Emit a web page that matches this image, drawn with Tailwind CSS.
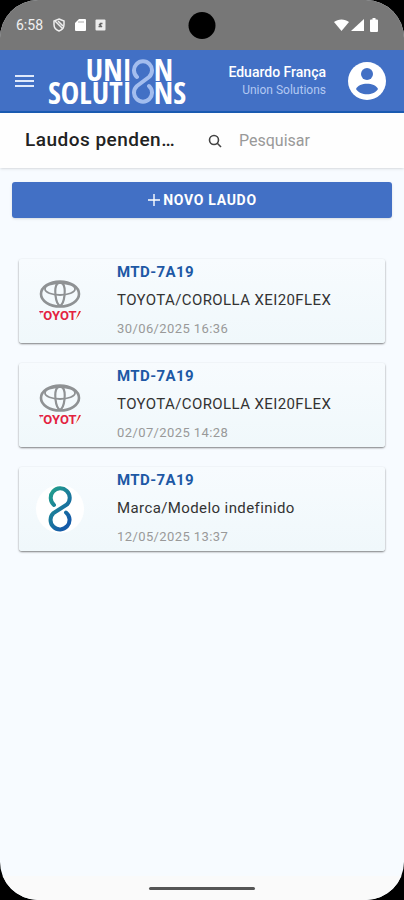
<!DOCTYPE html>
<html lang="pt-BR">
<head>
    <meta charset="UTF-8">
    <meta name="viewport" content="width=device-width, initial-scale=1.0">
    <title>Laudos pendentes</title>
    <script src="https://cdn.jsdelivr.net/npm/@tailwindcss/browser@4"></script>
</head>
<body class="bg-black font-[Roboto,sans-serif]">
    <div class="relative flex min-h-screen flex-col overflow-hidden rounded-[38px] bg-[#f7fbff]">

        <!-- Status bar -->
        <div class="relative flex h-[50px] items-center justify-between bg-[#777777] pl-4 pr-[26px] text-white">
            <div class="flex items-center gap-[9px]">
                <span class="text-sm text-white/90">6:58</span>
                <svg class="h-[14px] w-[14px]" viewBox="0 0 14 14" fill="none" stroke="#eeeeee" stroke-width="1.5">
                    <path d="M7 1 12 3v3.500C12 9.500 10 12 7 13 4 12 2 9.500 2 6.500V3z"/>
                    <path d="M3 3l8 8M6 3l5 5"/>
                </svg>
                <svg class="h-[14px] w-[11px]" viewBox="0 0 11 14" fill="#ffffff">
                    <path d="M4 1h6a1 1 0 0 1 1 1v10a1 1 0 0 1-1 1H1a1 1 0 0 1-1-1V5z"/>
                    <path d="M4 3v2M6 3v2M8 3v2" stroke="#aaaaaa"/>
                </svg>
                <svg class="h-[12px] w-[11px]" viewBox="0 0 11 12">
                    <rect x="0.500" y="0.500" width="10" height="11" rx="1" fill="#eeeeee"/>
                    <path d="M3.500 7.500h2v-3h2M4 5l3 3" stroke="#666666" stroke-width="1.300" fill="none"/>
                </svg>
            </div>
            <div class="absolute left-1/2 top-3 h-[27px] w-[27px] -translate-x-1/2 rounded-full bg-black"></div>
            <div class="flex items-center gap-[2px]">
                <svg class="h-[14px] w-[15px]" viewBox="0 0 15 14" fill="#ffffff"><path d="M0 4C4 .5 11 .5 15 4L7.500 13z"/></svg>
                <svg class="h-[14px] w-[13px]" viewBox="0 0 13 14" fill="#ffffff"><path d="M13 1v12H0z"/></svg>
                <svg class="ml-1 h-[14px] w-[8px]" viewBox="0 0 8 14" fill="#ffffff"><path d="M2.500 0h3v1.500H7a1 1 0 0 1 1 1V13a1 1 0 0 1-1 1H1a1 1 0 0 1-1-1V2.500a1 1 0 0 1 1-1h1.500z"/></svg>
            </div>
        </div>

        <!-- Header -->
        <header class="flex h-[63px] items-center border-b-2 border-[#1b5cb3] bg-[#4270c5] pl-[15px] pr-[18px] text-white">
            <button type="button" aria-label="Menu" class="mr-[14px] shrink-0">
                <svg class="h-[14px] w-[19px]" viewBox="0 0 19 14" stroke="#dfe9fb" stroke-width="2"><path d="M0 2h19M0 7h19M0 12h19"/></svg>
            </button>
            <div class="flex items-center font-['Open_Sans_Condensed','Noto_Sans_Condensed',Roboto,sans-serif] text-[31px] font-extrabold leading-[23px]">
                <div class="text-right">
                    <div>UNI</div>
                    <div>SOLUTI</div>
                </div>
                <svg class="h-[46px] w-[22px]" viewBox="0 0 22 46" fill="none" stroke="#a3bdee" stroke-width="4" stroke-linecap="round">
                    <path d="M5 19A9 9 0 1 1 17 19L5 28A9 9 0 1 0 17 28"/>
                </svg>
                <div>
                    <div>N</div>
                    <div>NS</div>
                </div>
            </div>
            <div class="ml-auto text-right">
                <div class="text-sm font-medium leading-[18px]">Eduardo França</div>
                <div class="text-xs leading-[18px] text-[#b2c8f2]">Union Solutions</div>
            </div>
            <a href="#perfil" aria-label="Perfil" class="ml-[22px] shrink-0">
                <svg class="h-[38px] w-[38px]" viewBox="0 0 38 38">
                    <circle cx="19" cy="19" r="19" fill="#ffffff"/>
                    <circle cx="19" cy="12" r="6" fill="#4270c5"/>
                    <path d="M8 27c3-7 19-7 22 0-4 7-18 7-22 0z" fill="#4270c5"/>
                </svg>
            </a>
        </header>

        <!-- Title and search -->
        <div class="flex h-[55px] items-center bg-[#fefefe] pl-[25px] pr-4 shadow">
            <h1 class="w-[155px] shrink-0 truncate text-[19px] font-medium tracking-wide text-[#222222]">Laudos pendentes</h1>
            <svg class="ml-7 h-[14px] w-[14px] shrink-0" viewBox="0 0 14 14" fill="none" stroke="#444444" stroke-width="1.600"><circle cx="6" cy="6" r="4.500"/><path d="m9 9 4 4"/></svg>
            <input type="search" aria-label="Pesquisar" placeholder="Pesquisar" class="ml-[17px] h-8 min-w-0 flex-1 bg-transparent text-base outline-none placeholder:text-[#999999]">
        </div>

        <!-- Content -->
        <main class="flex flex-1 flex-col">
            <button type="button" class="mx-3 mt-[14px] flex h-[36px] items-center justify-center gap-[2px] rounded-[3px] bg-[#4270c5] text-sm font-bold tracking-wider text-white shadow">
                <svg class="h-[14px] w-[14px]" viewBox="0 0 14 14" stroke="#ffffff" stroke-width="1.400"><path d="M7 1v12M1 7h12"/></svg>
                NOVO LAUDO
            </button>

            <ul class="mx-[19px] mt-[41px] flex flex-col gap-5">
                <li>
                    <a href="#laudo-1" class="flex h-[84px] items-center rounded-[3px] bg-linear-to-b from-[#f7fbfe] to-[#f0f8fb] pl-4 shadow-[0_1px_2px_rgba(0,0,0,0.5)]">
                        <svg class="h-[50px] w-[50px] shrink-0" viewBox="0 0 50 50"><use href="#toyota"/></svg>
                        <div class="ml-8 flex flex-col tracking-wide">
                            <span class="text-[15px] font-bold leading-[26px] text-[#1d58a5]">MTD-7A19</span>
                            <span class="text-[15px] leading-[30px] text-[#333333]">TOYOTA/COROLLA XEI20FLEX</span>
                            <span class="text-[13px] leading-[28px] text-[#999999]">30/06/2025 16:36</span>
                        </div>
                    </a>
                </li>
                <li>
                    <a href="#laudo-2" class="flex h-[84px] items-center rounded-[3px] bg-linear-to-b from-[#f7fbfe] to-[#f0f8fb] pl-4 shadow-[0_1px_2px_rgba(0,0,0,0.5)]">
                        <svg class="h-[50px] w-[50px] shrink-0" viewBox="0 0 50 50"><use href="#toyota"/></svg>
                        <div class="ml-8 flex flex-col tracking-wide">
                            <span class="text-[15px] font-bold leading-[26px] text-[#1d58a5]">MTD-7A19</span>
                            <span class="text-[15px] leading-[30px] text-[#333333]">TOYOTA/COROLLA XEI20FLEX</span>
                            <span class="text-[13px] leading-[28px] text-[#999999]">02/07/2025 14:28</span>
                        </div>
                    </a>
                </li>
                <li>
                    <a href="#laudo-3" class="flex h-[84px] items-center rounded-[3px] bg-linear-to-b from-[#f7fbfe] to-[#f0f8fb] pl-4 shadow-[0_1px_2px_rgba(0,0,0,0.5)]">
                        <svg class="h-[50px] w-[50px] shrink-0" viewBox="0 0 50 50" fill="none">
                            <defs>
                                <linearGradient id="brand" x1="0" y1="0" x2="0.600" y2="1">
                                    <stop offset="0" stop-color="#22a08c"/>
                                    <stop offset="1" stop-color="#145ba8"/>
                                </linearGradient>
                            </defs>
                            <circle cx="25" cy="25" r="24" fill="#ffffff"/>
                            <path d="M19 21A9.500 9.500 0 1 1 32 20.500L18.500 29A9.500 9.500 0 1 0 31 28.500" stroke="url(#brand)" stroke-width="4" stroke-linecap="round"/>
                        </svg>
                        <div class="ml-8 flex flex-col tracking-wide">
                            <span class="text-[15px] font-bold leading-[26px] text-[#1d58a5]">MTD-7A19</span>
                            <span class="text-[15px] leading-[30px] text-[#333333]">Marca/Modelo indefinido</span>
                            <span class="text-[13px] leading-[28px] text-[#999999]">12/05/2025 13:37</span>
                        </div>
                    </a>
                </li>
            </ul>
        </main>

        <!-- Gesture bar -->
        <div class="flex h-6 items-center justify-center bg-[#fafafa]">
            <div class="h-[3px] w-[106px] rounded-full bg-[#555555]"></div>
        </div>
    </div>

    <!-- Shared brand symbol -->
    <svg class="absolute h-0 w-0" aria-hidden="true">
        <clipPath id="badge"><ellipse cx="25" cy="25" rx="23" ry="25"/></clipPath>
        <symbol id="toyota" viewBox="0 0 50 50">
            <g fill="none" stroke="#8f9294">
                <ellipse cx="25" cy="18" rx="19" ry="12.500" stroke-width="2.600"/>
                <ellipse cx="25" cy="13" rx="15" ry="6" stroke-width="1.800"/>
                <path d="M25 30c-5-3-6-18-3-22 2-2 4-2 6 0 3 4 2 19-3 22z" stroke-width="2.200"/>
            </g>
            <g clip-path="url(#badge)">
                <text x="25" y="44" text-anchor="middle" font-family="Roboto, sans-serif" font-size="13" font-weight="700" fill="#e3223f">TOYOTA</text>
            </g>
        </symbol>
    </svg>
</body>
</html>
